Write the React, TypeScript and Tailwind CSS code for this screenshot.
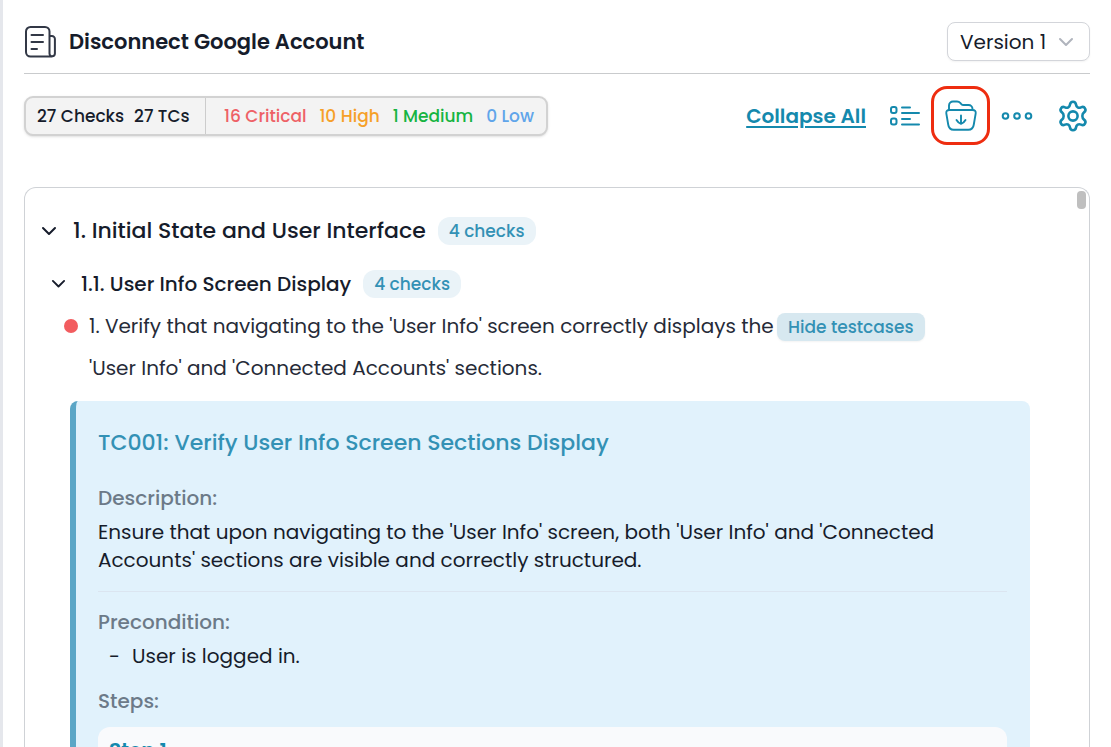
import React, { useState } from "react";

function DocumentIcon() {
  return (
    <svg width="32" height="32" viewBox="0 0 32 32" fill="none" stroke="#323846" strokeWidth="2" strokeLinecap="round" strokeLinejoin="round" aria-hidden="true">
      <path d="M28 30.500H6.500a4.500 4.500 0 0 1-4.500-4.500V5.500A4.500 4.500 0 0 1 6.500 1H21a4.500 4.500 0 0 1 4.500 4.500V27.500a2.700 2.700 0 0 0 5.400 0V13a3 3 0 0 0-3-3H25.500" />
      <path d="M7.500 9H19M7.500 16H19M7.500 23H13" />
    </svg>
  );
}

function ChevronIcon({ className }: { className: string }) {
  return (
    <svg className={className} viewBox="0 0 16 10" fill="none" stroke="currentColor" strokeWidth="2" strokeLinecap="round" strokeLinejoin="round" aria-hidden="true">
      <path d="M2 2l6 6 6-6" />
    </svg>
  );
}

function ListIcon() {
  return (
    <svg width="32" height="24" viewBox="0 0 32 24" fill="none" stroke="currentColor" strokeWidth="2" strokeLinecap="round" aria-hidden="true">
      <rect x="2" y="3" width="5.500" height="6" rx="2" />
      <rect x="2" y="14.500" width="5.500" height="6" rx="2" />
      <path d="M13 3.500h8M13 9h17M13 15h8M13 20.500h17" />
    </svg>
  );
}

function FolderDownIcon() {
  return (
    <svg width="34" height="34" viewBox="0 0 34 34" fill="none" stroke="currentColor" strokeWidth="1.900" strokeLinecap="round" strokeLinejoin="round" aria-hidden="true">
      <path d="M5 11V6.500a4 4 0 0 1 4-4h4c1.500 0 2.500.6 3.500 1.700l.8.900c.6.700 1.300.900 2.300.900h4.900a4 4 0 0 1 4 4v1" />
      <path d="M5.500 11h23c2.500 0 3.500 1.200 3.200 3.300l-1.900 11.200c-.5 3.500-2 5.300-5.500 5.300H9.700c-3.500 0-5-1.800-5.500-5.300L2.300 14.300C2 12.200 3 11 5.500 11z" />
      <path d="M17 16.500v8M12.500 21c1 1.800 2.300 3 4.500 3.800 2.200-.8 3.500-2 4.500-3.800" />
    </svg>
  );
}

function MoreIcon() {
  return (
    <svg width="32" height="10" viewBox="0 0 32 10" fill="none" stroke="currentColor" strokeWidth="2" aria-hidden="true">
      <circle cx="4.500" cy="5" r="2.800" />
      <circle cx="16" cy="5" r="2.800" />
      <circle cx="27.500" cy="5" r="2.800" />
    </svg>
  );
}

function GearIcon() {
  return (
    <svg width="32" height="32" viewBox="0 0 32 32" fill="none" stroke="currentColor" strokeWidth="2.600" strokeLinejoin="round" aria-hidden="true">
      <circle cx="16" cy="16" r="4.600" />
      <path d="M13 4.500C13.300 2.600 14.500 1.800 16 1.800s2.700.8 3 2.700c.4 2.800 2.500 4 5 2.900 1.800-.8 3.300-.3 4 1 .8 1.300.6 2.800-1 4-2.200 1.700-2.200 5.500 0 7.200 1.600 1.200 1.800 2.700 1 4-.7 1.300-2.200 1.800-4 1-2.500-1.100-4.600.1-5 2.900-.3 1.900-1.500 2.700-3 2.700s-2.700-.8-3-2.700c-.4-2.800-2.500-4-5-2.900-1.800.8-3.300.3-4-1-.8-1.300-.6-2.800 1-4 2.200-1.700 2.200-5.500 0-7.200-1.600-1.200-1.800-2.700-1-4 .7-1.300 2.200-1.800 4-1 2.500 1.100 4.600-.1 5-2.900z" />
    </svg>
  );
}

function ChecksBadge() {
  return (
    <span className="h-7 rounded-xl bg-[#eaf3f8] px-[11px] text-[17px] leading-7 font-medium text-[#3391b5]">
      4 checks
    </span>
  );
}

export default function App() {
  const [showCases, setShowCases] = useState(true);

  return (
    <main className="flex h-screen flex-col overflow-hidden border-l-3 border-[#e5e7ec] bg-white pr-[21px] pl-[21px] font-['Poppins','Inter',sans-serif] text-xl text-[#161c2b]">
      <header className="flex items-center justify-between border-b border-[#c9cbcd] pt-[22px] pb-3">
        <h1 className="flex items-center gap-[13px] text-[21px] leading-8 font-semibold">
          <DocumentIcon />
          Disconnect Google Account
        </h1>
        <div className="relative">
          <select aria-label="Version" className="h-[39px] w-[143px] appearance-none rounded-lg border border-[#d3d5da] bg-white pl-3 text-[20px] shadow-xs">
            <option>Version 1</option>
          </select>
          <ChevronIcon className="pointer-events-none absolute top-[15px] right-4 w-4 text-[#b0b4bd]" />
        </div>
      </header>

      <div className="flex items-center justify-between pt-3">
        <div className="mt-px flex h-10 items-stretch rounded-[9px] border-2 border-[#d2d2d2] bg-[#f3f3f3] text-[17px] leading-6 font-medium shadow-sm">
          <div className="flex w-[180px] items-center gap-[10px] border-r border-[#cccccc] pl-[11px]">
            <span>27 Checks</span>
            <span>27 TCs</span>
          </div>
          <div className="flex w-[340px] items-center justify-between pr-3 pl-[18px]">
            <span className="text-[#ee6166]">16 Critical</span>
            <span className="text-[#f6a029]">10 High</span>
            <span className="text-[#16b441]">1 Medium</span>
            <span className="text-[#60a5ea]">0 Low</span>
          </div>
        </div>
        <div className="flex items-center pr-px text-[#1489ad]">
          <button type="button" className="mr-[23px] font-semibold underline decoration-2 underline-offset-3">Collapse All</button>
          <button type="button" aria-label="List view" className="mr-[10px]"><ListIcon /></button>
          <button type="button" aria-label="Download to folder" className="mr-[11px] flex size-[59px] items-center justify-center rounded-2xl border-3 border-[#ee2d10]">
            <FolderDownIcon />
          </button>
          <button type="button" aria-label="More" className="mr-6"><MoreIcon /></button>
          <button type="button" aria-label="Settings"><GearIcon /></button>
        </div>
      </div>

      <section className="relative mt-[42px] flex-1 overflow-hidden rounded-t-xl border border-b-0 border-[#cfd2d6] pl-[15px]">
        <div className="absolute top-[3px] right-[3px] h-[18px] w-[9px] rounded-sm bg-[#bfbfbf]" />
        <div className="mt-[23px] flex h-10 items-center pl-px">
          <button type="button" aria-label="Toggle section 1" className="mr-4"><ChevronIcon className="w-4" /></button>
          <h2 className="mr-3 text-[22px] leading-8 font-medium">1. Initial State and User Interface</h2>
          <ChecksBadge />
        </div>
        <div className="mt-3 flex h-[42px] items-center pl-[11px]">
          <button type="button" aria-label="Toggle section 1.1" className="mr-[15px]"><ChevronIcon className="w-[15px]" /></button>
          <h3 className="mr-3 text-xl font-medium">1.1. User Info Screen Display</h3>
          <ChecksBadge />
        </div>
        <div className="flex items-start pl-6">
          <span className="mt-[14px] mr-[11px] size-[14px] shrink-0 rounded-full bg-[#f25c5f]" />
          <p className="w-[688px] leading-[42px] text-[#262b38]">
            1. Verify that navigating to the 'User Info' screen correctly displays the 'User Info' and 'Connected Accounts' sections.
          </p>
          <button type="button" onClick={() => setShowCases(!showCases)} className="mt-2 h-7 rounded-lg bg-[#d7e8f0] px-[11px] text-[17px] leading-7 font-medium text-[#3391b5] shadow-xs">
            {showCases ? "Hide testcases" : "Show testcases"}
          </button>
        </div>

        {showCases && (
          <article className="mt-3 mr-[59px] ml-[30px] h-[700px] rounded-lg border-l-6 border-[#5ba6c6] bg-[#e1f2fc] pt-[26px] pr-[23px] pl-[22px] leading-7">
            <h4 className="text-[22px] leading-8 font-medium text-[#3391b5]">TC001: Verify User Info Screen Sections Display</h4>
            <h5 className="mt-[25px] font-medium text-[#6c7a88]">Description:</h5>
            <p className="mt-[6px]">
              Ensure that upon navigating to the 'User Info' screen, both 'User Info' and 'Connected Accounts' sections are visible and correctly structured.
            </p>
            <hr className="mt-[17px] border-[#dbe5f0]" />
            <h5 className="mt-4 font-medium text-[#6c7a88]">Precondition:</h5>
            <ul className="mt-[6px] pl-[11px]">
              <li className="flex gap-3"><span>-</span>User is logged in.</li>
            </ul>
            <h5 className="mt-[17px] font-medium text-[#6c7a88]">Steps:</h5>
            <div className="mt-3 h-40 rounded-xl bg-[#f9fafc] px-[11px] pt-[9px] font-semibold text-[#1489ad]">Step 1</div>
          </article>
        )}
      </section>
    </main>
  );
}
